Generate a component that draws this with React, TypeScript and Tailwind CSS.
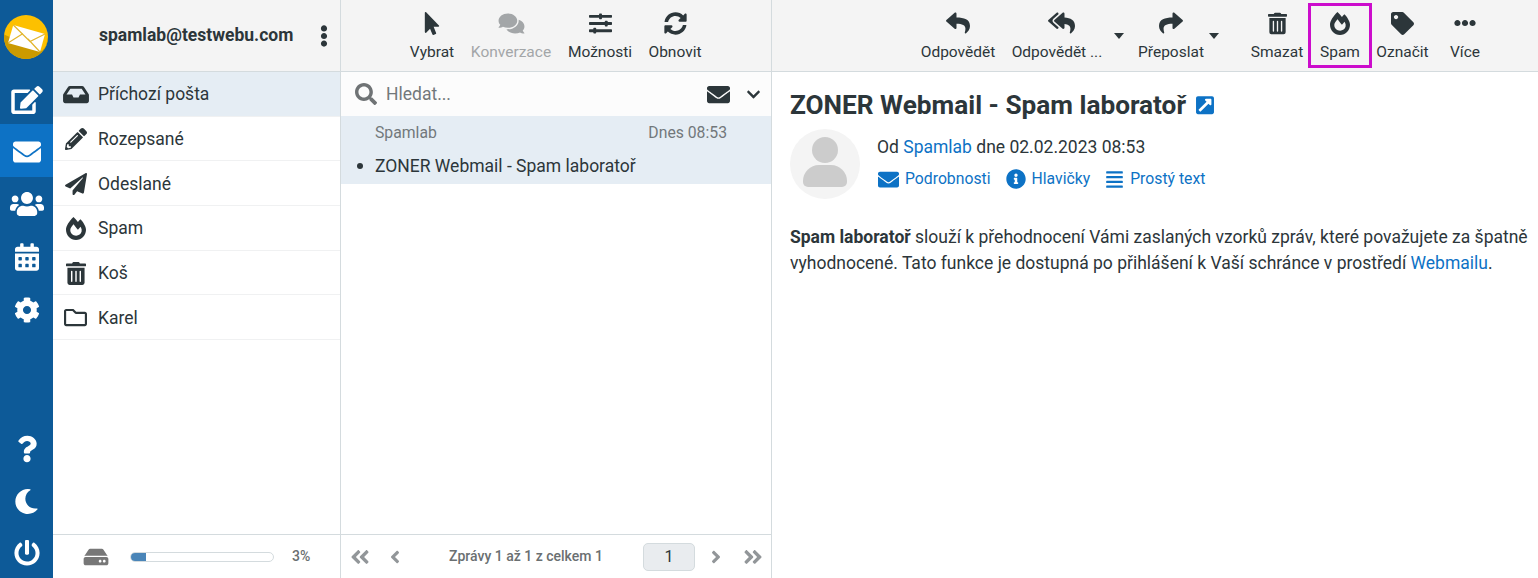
import type { ReactNode } from 'react'
import {
  FaAlignJustify,
  FaAngleDoubleLeft,
  FaAngleDoubleRight,
  FaAngleLeft,
  FaAngleRight,
  FaCalendarAlt,
  FaChevronDown,
  FaCog,
  FaComments,
  FaEdit,
  FaEllipsisH,
  FaEllipsisV,
  FaEnvelope,
  FaExternalLinkSquareAlt,
  FaFireAlt,
  FaHdd,
  FaInbox,
  FaInfoCircle,
  FaMoon,
  FaMousePointer,
  FaPaperPlane,
  FaPencilAlt,
  FaPowerOff,
  FaQuestion,
  FaRegFolder,
  FaReply,
  FaReplyAll,
  FaSearch,
  FaShare,
  FaSlidersH,
  FaSyncAlt,
  FaTag,
  FaTrashAlt,
  FaUsers,
} from 'react-icons/fa'

const folders = [
  { name: 'Příchozí pošta', icon: <FaInbox className="w-[26px] h-[23px]" />, active: true },
  { name: 'Rozepsané', icon: <FaPencilAlt className="w-[22px] h-[22px]" /> },
  { name: 'Odeslané', icon: <FaPaperPlane className="w-[22px] h-[22px]" /> },
  { name: 'Spam', icon: <FaFireAlt className="w-[20px] h-[23px]" /> },
  { name: 'Koš', icon: <FaTrashAlt className="w-[20px] h-[23px]" /> },
  { name: 'Karel', icon: <FaRegFolder className="w-[23px] h-[23px]" /> },
]

function RailItem({ children, active, className }: { children: ReactNode; active?: boolean; className: string }) {
  return (
    <div className={`flex items-center justify-center text-white w-[53px] ${active ? 'bg-[#0d72c5]' : ''} ${className}`}>
      {children}
    </div>
  )
}

function ToolButton({ label, icon, width, muted }: { label: string; icon: ReactNode; width: string; muted?: boolean }) {
  return (
    <div className={`flex flex-col items-center shrink-0 h-[71px] pt-[11px] ${width} ${muted ? 'text-[#a3a6a8]' : 'text-[#2c363a]'}`}>
      <div className="h-[24px] flex items-center justify-center">{icon}</div>
      <span className="mt-[6px] text-[15.5px] leading-[22px] whitespace-nowrap">{label}</span>
    </div>
  )
}

function Caret({ width }: { width: string }) {
  return (
    <div className={`shrink-0 h-[71px] pt-[33px] ${width}`}>
      <div className="w-0 h-0 border-x-[5px] border-x-transparent border-t-[6px] border-t-[#2c363a]" />
    </div>
  )
}

function Logo() {
  return (
    <svg viewBox="0 0 44 44" className="w-[44px] h-[44px]">
      <circle cx="22" cy="22" r="22" fill="#fdc000" />
      <path d="M44 22a22 22 0 0 1-44 0c0-.8 0-1.600.1-2.400L38 36l4-5z" fill="#cb9a00" />
      <path d="M9.300 10 41 19l-5 18-32-9z" fill="#fff" />
      <path d="M9.300 10 26 26.500 41 19M4 28l15-9.500M36 37 24 24" fill="none" stroke="#e2b52c" strokeWidth="1.200" />
    </svg>
  )
}

export default function App() {
  return (
    <div className="flex w-[1538px] h-[578px] overflow-hidden bg-white text-[#2c363a] font-['Roboto',sans-serif]">
      {/* rail */}
      <div className="w-[53px] shrink-0 bg-[#0d5a98] flex flex-col">
        <div className="h-[76px] pt-[15px] pl-[4px] shrink-0">
          <Logo />
        </div>
        <RailItem className="h-[48px]">
          <FaEdit className="w-[32px] h-[28px]" />
        </RailItem>
        <RailItem active className="h-[53px] pt-[3px]">
          <FaEnvelope className="w-[28px] h-[28px]" />
        </RailItem>
        <RailItem className="h-[53px]">
          <FaUsers className="w-[34px] h-[28px]" />
        </RailItem>
        <RailItem className="h-[53px]">
          <FaCalendarAlt className="w-[24px] h-[28px]" />
        </RailItem>
        <RailItem className="h-[53px]">
          <FaCog className="w-[26px] h-[26px]" />
        </RailItem>
        <div className="flex-1" />
        <RailItem className="h-[53px]">
          <FaQuestion className="w-[20px] h-[28px]" />
        </RailItem>
        <RailItem className="h-[53px]">
          <FaMoon className="w-[25px] h-[27px]" />
        </RailItem>
        <RailItem className="h-[50px]">
          <FaPowerOff className="w-[26px] h-[26px]" />
        </RailItem>
      </div>

      {/* folders */}
      <div className="w-[288px] shrink-0 border-r border-[#d4dbde] flex flex-col">
        <div className="h-[72px] shrink-0 bg-[#f4f4f4] border-b border-[#d4dbde] flex items-center">
          <span className="ml-[46px] w-[218px] text-[17.5px] font-bold whitespace-nowrap">spamlab@testwebu.com</span>
          <FaEllipsisV className="w-[14px] h-[22px]" />
        </div>
        <div className="flex-1">
          {folders.map((f) => (
            <div
              key={f.name}
              className={`h-[44.7px] pt-[1px] flex items-center border-b border-[#f0f1f2] ${f.active ? 'bg-[#e5edf4]' : ''}`}
            >
              <div className="w-[45px] shrink-0 flex justify-center">{f.icon}</div>
              <span className="text-[17.5px]">{f.name}</span>
            </div>
          ))}
        </div>
        <div className="h-[44px] shrink-0 border-t border-[#d4dbde] flex items-center">
          <FaHdd className="ml-[30px] w-[26px] h-[22px] text-[#777]" />
          <div className="ml-[21px] w-[144px] h-[10px] rounded-full border border-[#d4dbde] overflow-hidden">
            <div className="w-[15px] h-full bg-[#4a85b8]" />
          </div>
          <span className="ml-[18px] text-[14px] font-medium text-[#6a6f71]">3%</span>
        </div>
      </div>

      {/* message list */}
      <div className="w-[431px] shrink-0 border-r border-[#d4dbde] flex flex-col">
        <div className="h-[72px] shrink-0 bg-[#f4f4f4] border-b border-[#d4dbde] flex pl-[60px]">
          <ToolButton label="Vybrat" width="w-[62px]" icon={<FaMousePointer className="w-[16px] h-[23px]" />} />
          <ToolButton label="Konverzace" width="w-[96px]" muted icon={<FaComments className="w-[27px] h-[23px]" />} />
          <ToolButton label="Možnosti" width="w-[82px]" icon={<FaSlidersH className="w-[23px] h-[23px]" />} />
          <ToolButton label="Obnovit" width="w-[68px]" icon={<FaSyncAlt className="w-[23px] h-[23px]" />} />
        </div>
        <div className="h-[44px] shrink-0 flex items-center bg-[#fcfcfc]">
          <FaSearch className="ml-[14px] w-[22px] h-[22px] text-[#6f7375]" />
          <span className="ml-[9px] flex-1 text-[17.5px] text-[#72787b]">Hledat...</span>
          <FaEnvelope className="w-[23px] h-[23px]" />
          <FaChevronDown className="ml-[16px] mr-[10px] w-[15px] h-[15px]" />
        </div>
        <div className="h-[68px] shrink-0 bg-[#e5edf4] pl-[34px] pr-[44px] pt-[6px]">
          <div className="flex justify-between text-[15.75px] leading-[22px] text-[#72787b]">
            <span>Spamlab</span>
            <span>Dnes 08:53</span>
          </div>
          <div className="relative mt-[11px] text-[17.5px] leading-[22px] whitespace-nowrap">
            <span className="absolute left-[-18px] top-[8px] w-[6px] h-[6px] rounded-full bg-[#2c363a]" />
            ZONER Webmail - Spam laboratoř
          </div>
        </div>
        <div className="flex-1" />
        <div className="h-[44px] shrink-0 border-t border-[#d4dbde] flex items-center text-[#929699]">
          <FaAngleDoubleLeft className="ml-[8px] w-[22px] h-[22px]" />
          <FaAngleLeft className="ml-[14px] w-[20px] h-[20px]" />
          <span className="ml-[44px] w-[194px] text-[14px] font-medium text-[#6a6f71]">Zprávy 1 až 1 z celkem 1</span>
          <div className="w-[52px] h-[28px] rounded-[5px] bg-[#e9ecef] border border-[#d4dbde] flex items-center justify-center text-[16px] text-[#2c363a]">
            1
          </div>
          <FaAngleRight className="ml-[11px] w-[20px] h-[20px]" />
          <FaAngleDoubleRight className="ml-[16px] w-[22px] h-[22px]" />
        </div>
      </div>

      {/* message */}
      <div className="flex-1 flex flex-col min-w-0">
        <div className="h-[72px] shrink-0 bg-[#f4f4f4] border-b border-[#d4dbde] flex pl-[142px]">
          <ToolButton label="Odpovědět" width="w-[88px]" icon={<FaReply className="w-[24px] h-[24px]" />} />
          <ToolButton label="Odpovědět ..." width="w-[110px]" icon={<FaReplyAll className="ml-[8px] w-[27px] h-[24px]" />} />
          <Caret width="w-[21px] pl-[2px]" />
          <ToolButton label="Přeposlat" width="w-[76px]" icon={<FaShare className="w-[24px] h-[24px]" />} />
          <Caret width="w-[37px]" />
          <ToolButton label="Smazat" width="w-[62px]" icon={<FaTrashAlt className="w-[19px] h-[23px]" />} />
          <div className="relative w-[64px] shrink-0">
            <ToolButton label="Spam" width="w-[64px]" icon={<FaFireAlt className="w-[20px] h-[23px]" />} />
            <div className="absolute left-0 top-[3px] w-[64px] h-[65px] border-[3px] border-[#cc0ccc]" />
          </div>
          <ToolButton label="Označit" width="w-[61px]" icon={<FaTag className="w-[23px] h-[23px]" />} />
          <ToolButton label="Více" width="w-[64px]" icon={<FaEllipsisH className="w-[22px] h-[22px]" />} />
        </div>
        <div className="pl-[18px] pr-[8px] pt-[17px]">
          <div className="flex items-center h-[32px]">
            <h1 className="text-[26.2px] leading-[32px] font-bold">ZONER Webmail - Spam laboratoř</h1>
            <FaExternalLinkSquareAlt className="ml-[10px] w-[18px] h-[20.5px] text-[#0d72c5]" />
          </div>
          <div className="flex mt-[8px]">
            <div className="w-[70px] h-[70px] rounded-full bg-[#f4f4f4] relative overflow-hidden shrink-0 flex flex-col items-center">
              <div className="mt-[8px] w-[26px] h-[26px] rounded-full bg-[#ccc]" />
              <div className="mt-[2px] w-[44px] h-[22px] rounded-t-[16px] rounded-b-[5px] bg-[#ccc]" />
            </div>
            <div className="ml-[17px] mt-[6px]">
              <div className="text-[17.5px] leading-[24px]">
                Od <span className="text-[#0d72c5]">Spamlab</span> dne 02.02.2023 08:53
              </div>
              <div className="flex items-center mt-[8px] text-[15.75px] leading-[24px] text-[#0d72c5]">
                <FaEnvelope className="ml-[1px] w-[21px] h-[21px]" />
                <span className="ml-[6px]">Podrobnosti</span>
                <FaInfoCircle className="ml-[15px] w-[20px] h-[20px]" />
                <span className="ml-[6px]">Hlavičky</span>
                <FaAlignJustify className="ml-[15px] w-[19px] h-[19px]" />
                <span className="ml-[6px]">Prostý text</span>
              </div>
            </div>
          </div>
          <p className="mt-[25px] text-[17.5px] leading-[26px]">
            <b>Spam laboratoř</b> slouží k přehodnocení Vámi zaslaných vzorků zpráv, které považujete za špatně
            vyhodnocené. Tato funkce je dostupná po přihlášení k Vaší schránce v prostředí{' '}
            <span className="text-[#0d72c5]">Webmailu</span>.
          </p>
        </div>
      </div>
    </div>
  )
}
